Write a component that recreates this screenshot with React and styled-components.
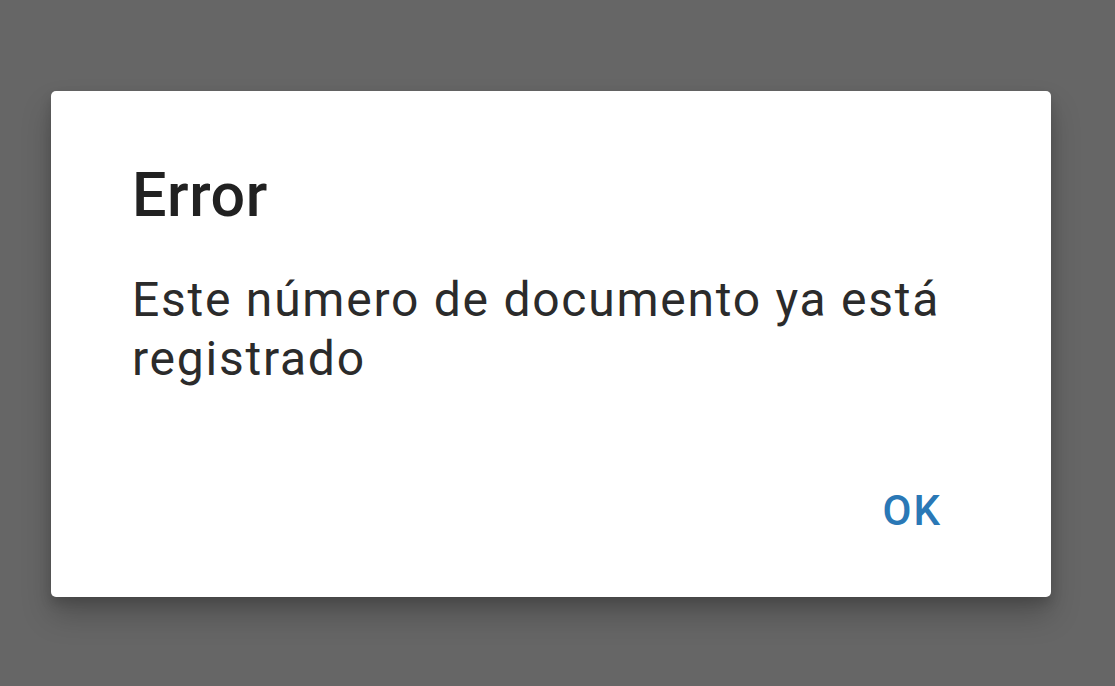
import React from "react";
import styled, { createGlobalStyle } from "styled-components";

const GlobalStyle = createGlobalStyle`
  html, body {
    margin: 0;
    padding: 0;
    background: #666666;
  }
  body {
    font-family: Roboto, "Noto Sans", sans-serif;
  }
`;

function App() {
  return (
    <>
      <GlobalStyle />
      <Backdrop>
        <Dialog role="alertdialog">
          <Title>Error</Title>
          <Message>Este número de documento ya está registrado</Message>
          <Actions>
            <ActionButton type="button">OK</ActionButton>
          </Actions>
        </Dialog>
      </Backdrop>
    </>
  );
}

const Backdrop = styled.div`
  width: 100%;
  height: 686px;
  background: #666666;
  padding: 91px 0 0 51px;
  box-sizing: border-box;
  overflow: hidden;
`;

const Dialog = styled.div`
  width: 1000px;
  height: 506px;
  box-sizing: border-box;
  background: #ffffff;
  border-radius: 5px;
  box-shadow: 0 18px 30px rgba(0, 0, 0, 0.22), 0 6px 12px rgba(0, 0, 0, 0.15);
  padding: 64px 60px 0 81px;
  display: flex;
  flex-direction: column;
`;

const Title = styled.h2`
  margin: 0;
  font-size: 61px;
  font-weight: 500;
  letter-spacing: 0.6px;
  line-height: 80px;
  color: #212121;
`;

const Message = styled.p`
  margin: 35px 0 0 0;
  font-size: 48px;
  font-weight: 400;
  letter-spacing: 1.75px;
  line-height: 59px;
  color: #2b2b2b;
`;

const Actions = styled.div`
  display: flex;
  justify-content: flex-end;
  margin-top: auto;
  padding-bottom: 62px;
`;

const ActionButton = styled.button`
  border: none;
  background: transparent;
  padding: 0 49px 0 0;
  font-family: Roboto, "Noto Sans", sans-serif;
  font-size: 42px;
  font-weight: 500;
  letter-spacing: 2px;
  color: #2a78b6;
  cursor: pointer;
`;

export default App;
